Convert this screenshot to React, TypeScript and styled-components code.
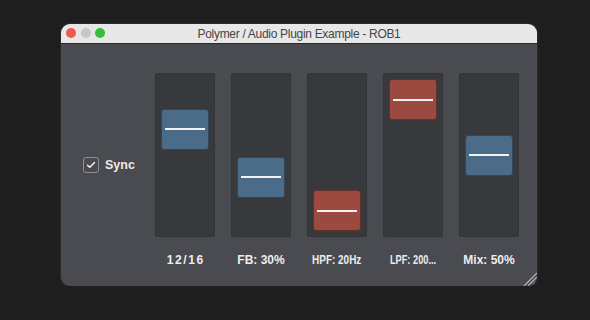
import React from "react";
import styled, { createGlobalStyle } from "styled-components";

const GlobalStyle = createGlobalStyle`
  html, body {
    margin: 0;
    padding: 0;
    background: #1e1e1f;
    font-family: "Liberation Sans", Arial, sans-serif;
  }
`;

const Page = styled.div`
  padding: 24px 0 0 61px;
`;

const Window = styled.div`
  position: relative;
  width: 476px;
  height: 262px;
  border-radius: 9px;
  overflow: hidden;
  display: flex;
  flex-direction: column;
  background: #4a4b50;
  box-shadow: 0 0 0 1px #2a2a2c;
`;

const TitleBar = styled.div`
  height: 20px;
  flex: none;
  display: grid;
  grid-template-columns: 1fr auto 1fr;
  align-items: center;
  background: #e8e7e8;
  border-bottom: 1px solid #2b2b2d;
  box-sizing: border-box;
`;

const Lights = styled.div`
  display: flex;
  gap: 4.5px;
  padding-left: 5px;
  margin-top: -1px;
`;

const Light = styled.span<{ $color: string }>`
  width: 10px;
  height: 10px;
  border-radius: 50%;
  background: ${(p) => p.$color};
`;

const Title = styled.div`
  font-size: 12px;
  line-height: 14px;
  padding-top: 1px;
  color: #454545;
  white-space: nowrap;
  letter-spacing: -0.3px;
`;

const Content = styled.div`
  flex: 1;
  display: flex;
  padding: 29px 0 0 22px;
`;

const SyncColumn = styled.label`
  width: 72px;
  flex: none;
  display: flex;
  align-items: center;
  align-self: flex-start;
  gap: 6px;
  margin-top: 84px;
  height: 16px;
`;

const CheckBox = styled.span`
  width: 16px;
  height: 16px;
  box-sizing: border-box;
  border: 1.5px solid #8f9094;
  border-radius: 3px;
  display: flex;
  align-items: center;
  justify-content: center;
`;

const SyncText = styled.span`
  font-size: 12.5px;
  font-weight: bold;
  color: #ececec;
`;

const Sliders = styled.div`
  display: flex;
  gap: 16px;
`;

const SliderColumn = styled.div`
  width: 60px;
  display: flex;
  flex-direction: column;
  align-items: center;
`;

const Track = styled.div`
  position: relative;
  width: 60px;
  height: 164px;
  background: #38393d;
  border-radius: 3px;
  box-shadow: inset 0 0 0 1px #333438;
`;

const Thumb = styled.div<{ $red: boolean }>`
  position: absolute;
  left: 6px;
  width: 48px;
  height: 41px;
  box-sizing: border-box;
  border-radius: 3px;
  background: ${(p) => (p.$red ? "#9c4a3f" : "#4a6c89")};
  border: 1px solid ${(p) => (p.$red ? "#5e322d" : "#33475a")};
  display: flex;
  align-items: center;
  justify-content: center;
`;

const ThumbLine = styled.span`
  width: 40px;
  height: 2px;
  background: #f2f2f2;
`;

const Label = styled.div<{ $scale: number; $spacing: number }>`
  margin-top: 16px;
  font-size: 12px;
  line-height: 14px;
  font-weight: bold;
  color: #ededed;
  white-space: nowrap;
  letter-spacing: ${(p) => p.$spacing}px;
  padding-left: ${(p) => p.$spacing}px;
  transform: scaleX(${(p) => p.$scale});
`;

const Grip = styled.svg`
  position: absolute;
  right: 0;
  bottom: 0;
`;

type SliderSpec = {
  value: number;
  red: boolean;
  label: string;
  scale: number;
  spacing: number;
};

const sliders: SliderSpec[] = [
  { value: 0.73, red: false, label: "12/16", scale: 1, spacing: 1.6 },
  { value: 0.3, red: false, label: "FB: 30%", scale: 1, spacing: 0 },
  { value: 0, red: true, label: "HPF: 20Hz", scale: 0.83, spacing: 0 },
  { value: 1, red: true, label: "LPF: 200...", scale: 0.77, spacing: 0 },
  { value: 0.5, red: false, label: "Mix: 50%", scale: 1, spacing: 0 },
];

export default function App() {
  return (
    <>
      <GlobalStyle />
      <Page>
        <Window>
          <TitleBar>
            <Lights>
              <Light $color="#ee5a52" />
              <Light $color="#c8c7c8" />
              <Light $color="#35bf3f" />
            </Lights>
            <Title>Polymer / Audio Plugin Example - ROB1</Title>
            <span />
          </TitleBar>
          <Content>
            <SyncColumn>
              <CheckBox>
                <svg width="10" height="8" viewBox="0 0 10 8">
                  <path
                    d="M1.5 4.2 L3.8 6.3 L8.5 1.5"
                    fill="none"
                    stroke="#f4f4f4"
                    strokeWidth="1.5"
                    strokeLinecap="round"
                    strokeLinejoin="round"
                  />
                </svg>
              </CheckBox>
              <SyncText>Sync</SyncText>
            </SyncColumn>
            <Sliders>
              {sliders.map((s) => (
                <SliderColumn key={s.label}>
                  <Track>
                    <Thumb $red={s.red} style={{ top: 6 + (1 - s.value) * 111 }}>
                      <ThumbLine />
                    </Thumb>
                  </Track>
                  <Label $scale={s.scale} $spacing={s.spacing}>
                    {s.label}
                  </Label>
                </SliderColumn>
              ))}
            </Sliders>
          </Content>
          <Grip width="18" height="18" viewBox="0 0 18 18">
            <g stroke="#b4b5b8" strokeWidth="1.2">
              <line x1="5" y1="18" x2="18" y2="5" />
              <line x1="9" y1="18" x2="18" y2="9" />
              <line x1="13" y1="18" x2="18" y2="13" />
            </g>
          </Grip>
        </Window>
      </Page>
    </>
  );
}
